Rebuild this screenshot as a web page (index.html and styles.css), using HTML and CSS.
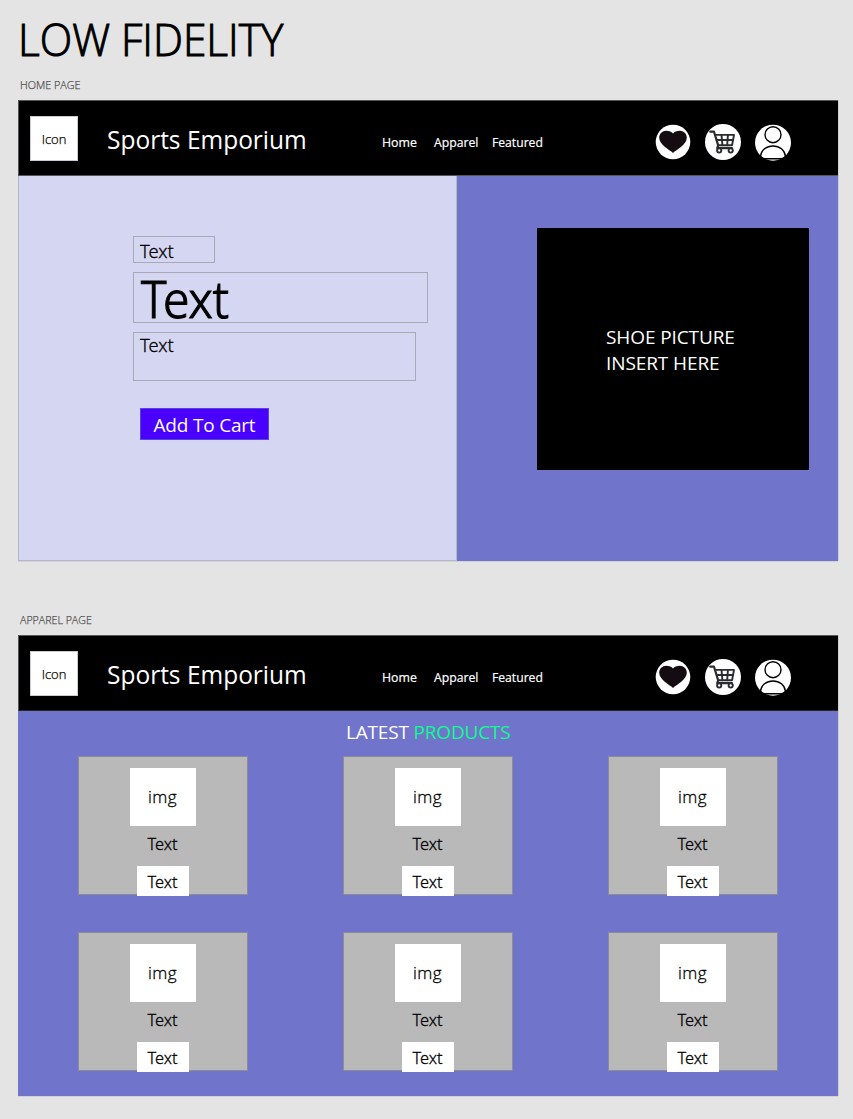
FILE: index.html
```html
<!DOCTYPE html>
<html lang="en">
<head>
<meta charset="utf-8">
<title>Low Fidelity</title>
<link rel="stylesheet" href="styles.css">
</head>
<body>
<svg class="defs" width="0" height="0">
  <symbol id="heart" viewBox="0 0 36 38">
    <circle cx="18" cy="19" r="17.3" fill="#fff"/>
    <path d="M18 29.900C14.500 26.800 4.200 22 4.200 14.600C4.200 10.600 7.400 7.700 11.200 7.700C14 7.700 16.600 8.500 18 10.600C19.400 8.500 22 7.700 24.800 7.700C28.600 7.700 31.800 10.600 31.800 14.600C31.800 22 21.500 26.800 18 29.900Z" fill="#140c10"/>
  </symbol>
  <symbol id="cart" viewBox="0 0 36 38">
    <circle cx="18" cy="19" r="18" fill="#fff"/>
    <g fill="none" stroke="#2b2c30" stroke-width="1.900" stroke-linecap="round" stroke-linejoin="round">
      <path d="M5.200 8.700H9L13.200 22.400L12.200 25.200H27" stroke-width="2.200"/>
      <path d="M10.500 11.900H29L27.100 22.200H13.200"/>
      <path d="M11.800 17H28M16.500 11.900L17.400 22.200M22.900 11.900L22.200 22.200"/>
      <circle cx="14.200" cy="27.500" r="2.100" fill="#fff"/>
      <circle cx="25.700" cy="27.500" r="2.100" fill="#fff"/>
    </g>
  </symbol>
  <symbol id="user" viewBox="0 0 36 38">
    <circle cx="18" cy="19.700" r="18" fill="#fff"/>
    <g fill="none" stroke="#000" stroke-width="1.400">
      <circle cx="18" cy="11.700" r="8"/>
      <path d="M5.500 33.500C6.200 27 11.400 23 18 23C24.600 23 29.800 27 30.500 33.500Q29 35.700 26 35.700H10Q7 35.700 5.500 33.500"/>
    </g>
  </symbol>
</svg>

<h1 class="title"><span class="t">LOW FIDELITY</span></h1>

<p class="label label-home"><span class="t">HOME PAGE</span></p>
<section class="board home">
  <header class="bar">
    <div class="logo">Icon</div>
    <div class="brand"><span class="t">Sports Emporium</span></div>
    <a class="link link-home"><span class="t">Home</span></a>
    <a class="link"><span class="t">Apparel</span></a>
    <a class="link link-featured"><span class="t">Featured</span></a>
    <div class="icons">
      <svg><use href="#heart"/></svg>
      <svg><use href="#cart"/></svg>
      <svg><use href="#user"/></svg>
    </div>
  </header>
  <div class="hero">
    <div class="copy">
      <div class="field field-small"><span class="t">Text</span></div>
      <div class="field field-large"><span class="t">Text</span></div>
      <div class="field field-body"><span class="t">Text</span></div>
      <div class="add">Add To Cart</div>
    </div>
    <div class="stage">
      <div class="picture">SHOE PICTURE<br>INSERT HERE</div>
    </div>
  </div>
</section>

<p class="label label-apparel"><span class="t">APPAREL PAGE</span></p>
<section class="board apparel">
  <header class="bar">
    <div class="logo">Icon</div>
    <div class="brand"><span class="t">Sports Emporium</span></div>
    <a class="link link-home"><span class="t">Home</span></a>
    <a class="link"><span class="t">Apparel</span></a>
    <a class="link link-featured"><span class="t">Featured</span></a>
    <div class="icons">
      <svg><use href="#heart"/></svg>
      <svg><use href="#cart"/></svg>
      <svg><use href="#user"/></svg>
    </div>
  </header>
  <h2 class="latest">LATEST <span class="green">PRODUCTS</span></h2>
  <div class="grid">
    <div class="card"><div class="img">img</div><div class="name"><span class="t">Text</span></div><div class="buy"><span class="t">Text</span></div></div>
    <div class="card"><div class="img">img</div><div class="name"><span class="t">Text</span></div><div class="buy"><span class="t">Text</span></div></div>
    <div class="card"><div class="img">img</div><div class="name"><span class="t">Text</span></div><div class="buy"><span class="t">Text</span></div></div>
    <div class="card"><div class="img">img</div><div class="name"><span class="t">Text</span></div><div class="buy"><span class="t">Text</span></div></div>
    <div class="card"><div class="img">img</div><div class="name"><span class="t">Text</span></div><div class="buy"><span class="t">Text</span></div></div>
    <div class="card"><div class="img">img</div><div class="name"><span class="t">Text</span></div><div class="buy"><span class="t">Text</span></div></div>
  </div>
</section>
</body>
</html>
```

FILE: styles.css
```css
* { box-sizing: border-box; }

body {
  margin: 0;
  padding: 9px 0 0 18px;
  height: 1119px;
  overflow: hidden;
  background: #e4e4e4;
  color: #000;
  font-family: "Open Sans", "Noto Sans", sans-serif;
  font-weight: 400;
}

h1, h2, p { margin: 0; font-weight: 400; }

.defs { display: block; height: 0; }

/* Slightly condensed text run */
.t {
  display: inline-block;
  transform: scaleX(var(--k, 1));
  transform-origin: 0 50%;
}

.title { height: 60px; line-height: 61px; font-size: 43.5px; --k: .975; font-weight: 300; -webkit-text-stroke: 1px #000; }

.label { height: 16px; line-height: 16px; font-size: 11.5px; color: #505050; font-weight: 300; -webkit-text-stroke: .25px #505050; }
.label-home { margin: 8px 0 7px 2px; --k: .935; }
.label-apparel { margin: 51px 0 7px 2px; --k: .925; }

.board { width: 820px; height: 461px; box-shadow: 0 1px 0 #d2d2d6, 1px 0 0 #cfcfd4; }
.home { background: #7074cb; }
.apparel { background: #7074cb; }

.bar {
  display: grid;
  grid-template-columns: 89px 274px 53px 57px 164px auto;
  align-items: start;
  height: 76px;
  background: #000;
  color: #fff;
  border: 1px solid #55555c;
  border-width: 1px 0 1px 1px;
  padding-right: 1px;
}
.apparel .bar { border-bottom-color: #26262a; }

.logo {
  width: 48px;
  height: 45px;
  margin: 15px 0 0 11px;
  background: #fff;
  border: 1px solid #c9cdcd;
  color: #000;
  font-size: 13px;
  line-height: 44px;
  text-align: center;
  font-weight: 300;
  -webkit-text-stroke: .25px #000;
}
.brand { margin-top: 23px; height: 30px; line-height: 30px; font-size: 25.5px; white-space: nowrap; --k: .96; margin-left: -.6px; }
.link { margin-top: 31px; line-height: 20px; font-size: 13px; --k: .94; margin-left: -1px; -webkit-text-stroke: .2px #fff; }
.link-home { --k: .95; margin-left: -.3px; }
.link-featured { --k: .935; margin-left: 0; }

.icons { display: flex; gap: 14px; margin-top: 22px; margin-left: -1px; }
.icons svg { display: block; width: 36px; height: 38px; }

.hero { display: flex; height: 385px; }
.copy {
  width: 439px;
  padding: 60px 0 0 114px;
  background: #d5d6f2;
  border: 1px solid #b6b6c6;
  border-width: 0 1px 1px 1px;
}
.field { border: 1px solid #a9a9b6; padding-left: 6px; font-family: "Noto Sans", sans-serif; font-weight: 300; -webkit-text-stroke: .3px #000; }
.field-small { width: 82px; height: 27px; line-height: 28px; font-size: 19px; --k: .965; }
.field-large { width: 295px; height: 51px; margin-top: 9px; line-height: 51px; font-size: 51px; --k: .94; -webkit-text-stroke: 1.1px #000; padding-left: 7px; }
.field-body { width: 283px; height: 49px; margin-top: 9px; line-height: 24px; font-size: 19px; --k: .965; }
.add {
  width: 129px;
  height: 32px;
  margin: 27px 0 0 7px;
  background: #4a00ff;
  border: 1px solid #5548d8;
  color: #fff;
  font-size: 19px;
  line-height: 32px;
  text-align: center;
  letter-spacing: -.2px;
}

.stage { flex: 1; padding: 52px 0 0 80px; }
.picture {
  width: 272px;
  height: 242px;
  padding: 96px 0 0 69px;
  background: #000;
  color: #fff;
  font-size: 19px;
  line-height: 26px;
  letter-spacing: -.1px;
}

.latest { padding: 6px 0 0 328px; height: 45px; line-height: 30px; font-size: 19px; color: #fff; white-space: nowrap; letter-spacing: -.18px; }
.green { color: #0bff8a; }

.grid {
  display: grid;
  grid-template-columns: repeat(3, 170px);
  grid-auto-rows: 139px;
  gap: 37px 95px;
  padding-left: 60px;
}
.card {
  display: flex;
  flex-direction: column;
  align-items: center;
  padding-top: 11px;
  background: #b9b9b9;
  border: 1px solid #8c8c98;
  font-size: 17px;
  font-weight: 300;
  -webkit-text-stroke: .3px #000;
}
.img { width: 66px; height: 58px; line-height: 58px; text-align: center; background: #fff; padding-right: 1px; letter-spacing: .4px; flex: none; }
.name, .buy { font-family: "Noto Sans", sans-serif; --k: .965; }
.name .t, .buy .t { transform-origin: 50% 50%; }
.name { height: 24px; line-height: 24px; margin-top: 6px; flex: none; }
.buy { width: 52px; height: 30px; line-height: 32px; margin-top: 10px; text-align: center; background: #fff; flex: none; }
```
